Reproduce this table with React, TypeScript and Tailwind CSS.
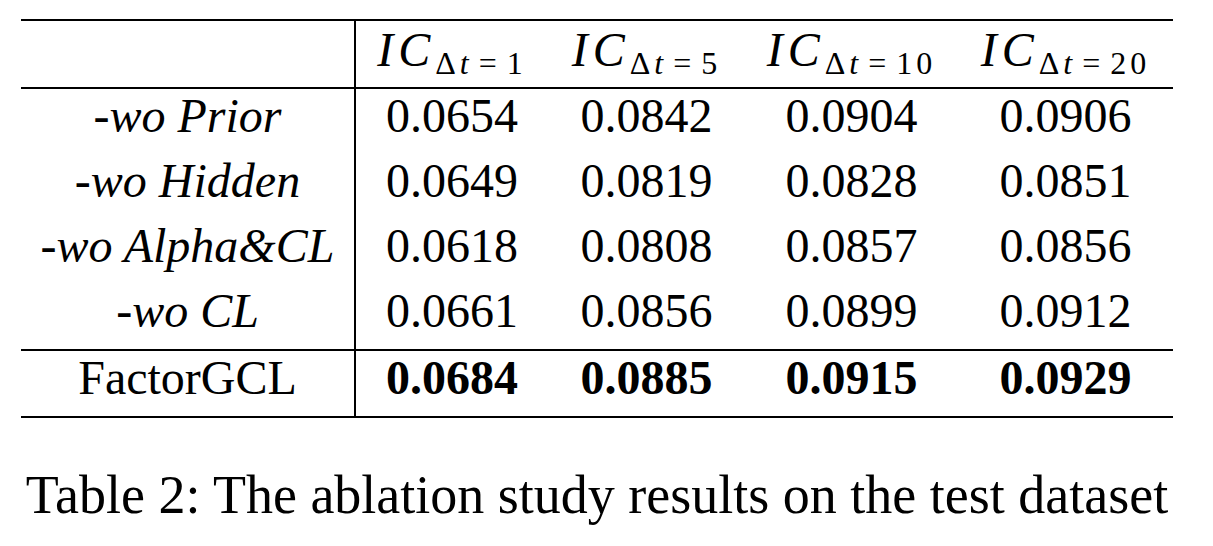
const rows = [
  { name: "-wo Prior", vals: ["0.0654", "0.0842", "0.0904", "0.0906"] },
  { name: "-wo Hidden", vals: ["0.0649", "0.0819", "0.0828", "0.0851"] },
  { name: "-wo Alpha&CL", vals: ["0.0618", "0.0808", "0.0857", "0.0856"] },
  { name: "-wo CL", vals: ["0.0661", "0.0856", "0.0899", "0.0912"] },
];

const horizons = ["1", "5", "10", "20"];

const cols = "grid grid-cols-[335px_192px_197px_213px_215px]";

function Rule() {
  return <div className="h-[2px] bg-black" />;
}

export default function App() {
  return (
    <div
      className="w-[1213px] h-[546px] bg-white text-black overflow-hidden"
      style={{ fontFamily: '"Liberation Serif", "Times New Roman", serif' }}
    >
      <div className="ml-[21px] w-[1152px] pt-[19px]">
        <Rule />

        {/* header */}
        <div className={cols}>
          <div className="h-[66px] border-r-2 border-black" />
          {horizons.map((h) => (
            <div key={h} className="h-[66px] pt-[5px] text-center text-[48px] leading-[48px] whitespace-nowrap">
              <span className="italic tracking-[5px]">IC</span>
              <span className="text-[32px] leading-none tracking-[4px] align-[-8px]">
                Δ<span className="italic">t</span>
                <span className="mx-[6px]">=</span>
                {h}
              </span>
            </div>
          ))}
        </div>

        <Rule />

        {rows.map((r) => (
          <div key={r.name} className={cols}>
            <div className="h-[65px] pt-[3px] border-r-2 border-black text-center text-[48px] leading-[48px] italic whitespace-nowrap">
              {r.name}
            </div>
            {r.vals.map((v, i) => (
              <div key={i} className="h-[65px] pt-[3px] text-center text-[48px] leading-[48px]">
                {v}
              </div>
            ))}
          </div>
        ))}

        <Rule />

        <div className={cols}>
          <div className="h-[65px] pt-[3px] border-r-2 border-black text-center text-[48px] leading-[48px]">
            FactorGCL
          </div>
          {["0.0684", "0.0885", "0.0915", "0.0929"].map((v) => (
            <div key={v} className="h-[65px] pt-[3px] text-center text-[48px] leading-[48px] font-bold">
              {v}
            </div>
          ))}
        </div>

        <Rule />

        <p className="mt-[50px] text-center text-[54px] leading-[54px] whitespace-nowrap">
          Table 2: The ablation study results on the test dataset
        </p>
      </div>
    </div>
  );
}
